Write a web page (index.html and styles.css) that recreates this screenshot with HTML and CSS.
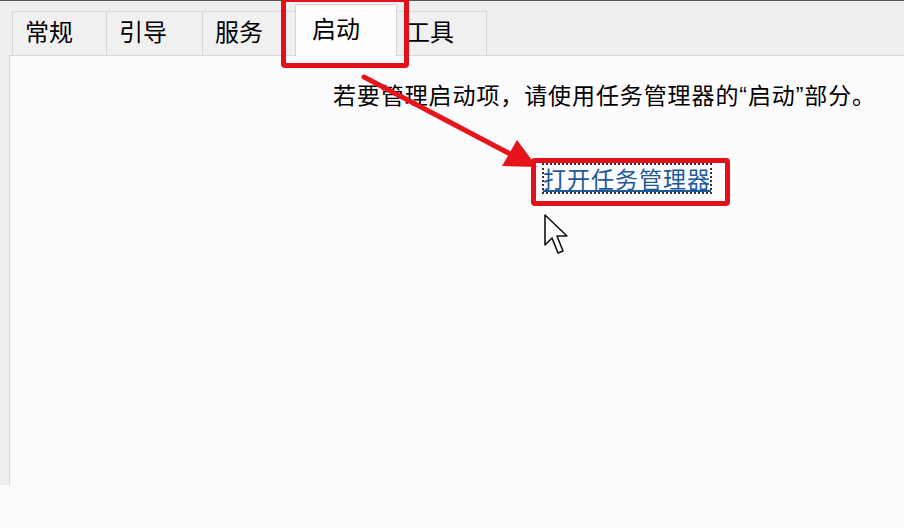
FILE: index.html
```html
<!DOCTYPE html>
<html lang="zh-CN">
<head>
<meta charset="utf-8">
<link rel="stylesheet" href="styles.css">
</head>
<body>
<div class="window">
  <div class="topline"></div>
  <div class="tabs">
    <div class="tab t1">常规</div>
    <div class="tab t2">引导</div>
    <div class="tab t3">服务</div>
    <div class="tab active">启动</div>
    <div class="tab t5">工具</div>
  </div>
  <div class="panel">
    <p class="msg">若要管理启动项，请使用任务管理器的<span class="q">“</span>启动<span class="q">”</span>部分。</p>
    <div class="linkrow"><a class="link" href="#">打开任务管理器</a></div>
  </div>
</div>
<div class="bottom"></div>

<div class="mark mark-tab"></div>
<div class="mark mark-link"></div>
<svg class="arrow" width="904" height="528" viewBox="0 0 904 528">
  <line x1="364" y1="77" x2="512" y2="155" stroke="#e8141c" stroke-width="5" stroke-linecap="round"/>
  <polygon points="537,167 502,166 517,140" fill="#e8141c"/>
</svg>
<svg class="cursor" width="30" height="46" viewBox="0 0 30 46">
  <path d="M2 2 L2 32 L9 25 L15 40 L20 38 L14 23 L24 23 Z" fill="#fff" stroke="#111" stroke-width="1.6" stroke-linejoin="round"/>
</svg>
</body>
</html>
```

FILE: styles.css
```css
html, body {
  margin: 0;
  padding: 0;
  background: #fbfafc;
  font-family: "Noto Sans CJK SC", "Noto Sans", sans-serif;
  color: #000;
  overflow: hidden;
}
.window {
  height: 485px;
  background: #efeff0;
  display: flex;
  flex-direction: column;
}
.topline {
  height: 1px;
  background: #555;
}
.tabs {
  display: flex;
  padding: 10px 0 0 12px;
  height: 44px;
  align-items: flex-end;
}
.tab {
  box-sizing: border-box;
  height: 44px;
  border: 1px solid #d6d6d6;
  border-bottom: none;
  border-right: none;
  background: #f0f0f0;
  font-size: 24px;
  line-height: 38px;
  padding-left: 12px;
}
.t1 { width: 94px; }
.t2 { width: 96px; }
.t3 { width: 93px; }
.tab.active {
  width: 102px;
  height: 52px;
  margin: 0 -2px -1px 0;
  background: #fdfdfd;
  border-right: 1px solid #d6d6d6;
  line-height: 46px;
  padding-left: 16px;
  position: relative;
  z-index: 1;
}
.t5 {
  width: 92px;
  border-right: 1px solid #d6d6d6;
  padding-left: 10px;
}
.panel {
  flex: 1;
  margin-left: 9px;
  background: #fcfbfd;
  border-left: 1px solid #d6d6d6;
  border-top: 1px solid #d6d6d6;
  padding-top: 21px;
}
.msg {
  margin: 0 0 0 323px;
  font-size: 23px;
  letter-spacing: 0.9px;
  line-height: 34px;
  white-space: nowrap;
}
.q {
  font-family: "Liberation Sans", sans-serif;
}
.linkrow {
  margin: 51px 0 0 533px;
}
.link {
  display: inline-block;
  font-size: 23px;
  letter-spacing: 1px;
  line-height: 29px;
  color: #1d5a98;
  text-decoration: underline;
  outline: 2px dotted #333;
  outline-offset: -1px;
}
.mark {
  position: absolute;
  border: 5px solid #e31019;
  border-radius: 4px;
}
.mark-tab {
  left: 281px;
  top: -3px;
  width: 118px;
  height: 61px;
}
.mark-link {
  left: 531px;
  top: 158px;
  width: 189px;
  height: 38px;
}
.arrow {
  position: absolute;
  left: 0;
  top: 0;
  pointer-events: none;
}
.cursor {
  position: absolute;
  left: 543px;
  top: 213px;
}
```
